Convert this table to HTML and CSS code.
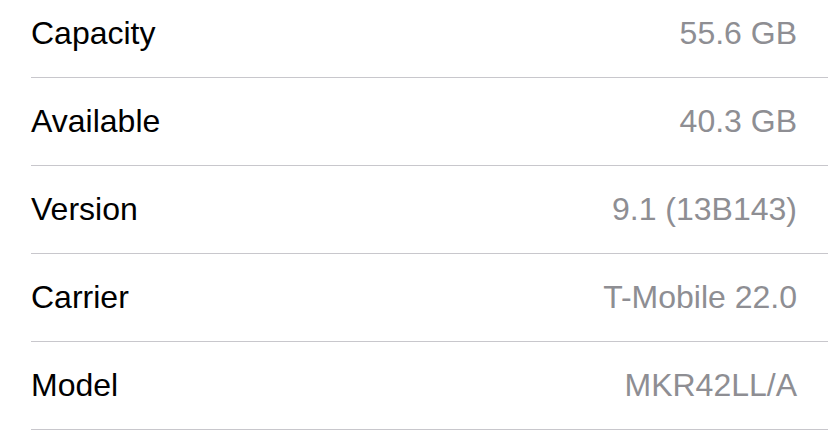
FILE: index.html
```html
<!DOCTYPE html>
<html>
<head>
<meta charset="utf-8">
<link rel="stylesheet" href="styles.css">
</head>
<body>
<div class="list">
  <div class="row"><span class="label">Capacity</span><span class="value">55.6 GB</span></div>
  <div class="row"><span class="label">Available</span><span class="value">40.3 GB</span></div>
  <div class="row"><span class="label">Version</span><span class="value">9.1 (13B143)</span></div>
  <div class="row"><span class="label">Carrier</span><span class="value">T-Mobile 22.0</span></div>
  <div class="row"><span class="label">Model</span><span class="value">MKR42LL/A</span></div>
</div>
</body>
</html>
```
FILE: styles.css
```css
html, body {
  margin: 0;
  padding: 0;
  background: #ffffff;
}
body {
  width: 828px;
  height: 436px;
  overflow: hidden;
  font-family: "Liberation Sans", Arial, sans-serif;
}
.list {
  margin-top: -10px;
  padding-left: 31px;
}
.row {
  height: 87px;
  border-bottom: 1px solid #c8c7cc;
  display: flex;
  align-items: center;
  justify-content: space-between;
  padding-right: 31px;
  font-size: 32px;
}
.label {
  color: #000000;
}
.value {
  color: #8e8e93;
}
```
